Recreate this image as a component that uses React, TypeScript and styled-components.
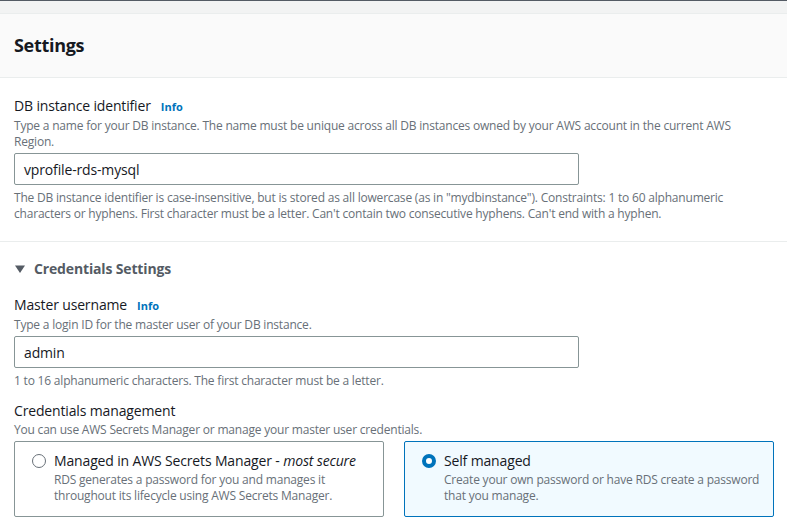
import React from "react";
import styled, { createGlobalStyle } from "styled-components";

const GlobalStyle = createGlobalStyle`
  body {
    margin: 0;
    background: #ffffff;
    font-family: "Open Sans", "Noto Sans", Arial, sans-serif;
    color: #16191f;
  }
`;

const Page = styled.div`
  width: 787px;
  height: 521px;
  overflow: hidden;
  background: #ffffff;
`;

const TopStrip = styled.div`
  height: 12px;
  background: #f2f3f3;
  border-top: 1px solid #545b64;
  border-bottom: 1px solid #eaeded;
`;

const Header = styled.div`
  height: 63px;
  display: flex;
  align-items: center;
  padding: 0 14px;
  background: #fafafa;
  border-bottom: 1px solid #eaeded;
`;

const Title = styled.h2`
  margin: 0 0 1px;
  font-size: 18px;
  font-weight: 700;
  color: #16191f;
  letter-spacing: -0.3px;
`;

const Section = styled.div<{ $divider?: boolean }>`
  padding: 17px 14px ${(p) => (p.$divider ? "19px" : "0")};
  border-bottom: ${(p) => (p.$divider ? "1px solid #eaeded" : "none")};
`;

const Field = styled.div<{ $gap?: number }>`
  margin-top: ${(p) => p.$gap ?? 0}px;
`;

const Label = styled.div`
  display: flex;
  align-items: baseline;
  gap: 10px;
  font-size: 14px;
  line-height: 22px;
  letter-spacing: -0.15px;
  color: #16191f;
`;

const InfoLink = styled.span`
  font-size: 11px;
  font-weight: 700;
  letter-spacing: 0;
  color: #0073bb;
`;

const Description = styled.div<{ $mt?: number }>`
  margin-top: ${(p) => p.$mt ?? 0}px;
  font-size: 12px;
  line-height: 16px;
  letter-spacing: -0.2px;
  color: #687078;
`;

const Input = styled.div`
  box-sizing: border-box;
  width: 565px;
  height: 32px;
  margin-top: 3px;
  padding: 0 9px;
  display: flex;
  align-items: center;
  border: 1px solid #879596;
  border-radius: 2px;
  font-size: 14px;
  letter-spacing: -0.15px;
  color: #16191f;
`;

const Expander = styled.div`
  display: flex;
  align-items: center;
  gap: 9px;
  padding-left: 1px;
  font-size: 14px;
  line-height: 20px;
  font-weight: 700;
  letter-spacing: -0.15px;
  color: #545b64;
`;

const Caret = styled.svg`
  width: 10px;
  height: 10px;
`;

const Tiles = styled.div`
  display: grid;
  grid-template-columns: 370px 370px;
  gap: 20px;
  margin-top: 3px;
`;

const Tile = styled.div<{ $selected?: boolean }>`
  box-sizing: border-box;
  height: 76px;
  display: flex;
  align-items: flex-start;
  gap: 8px;
  padding: 8px 6px 10px 17px;
  border: 1px solid ${(p) => (p.$selected ? "#0073bb" : "#879596")};
  border-radius: 2px;
  background: ${(p) => (p.$selected ? "#f1faff" : "#ffffff")};
`;

const Radio = styled.span<{ $checked?: boolean }>`
  box-sizing: border-box;
  flex: none;
  width: 14px;
  height: 14px;
  margin-top: 4px;
  border-radius: 50%;
  border: ${(p) => (p.$checked ? "4px solid #0073bb" : "1.5px solid #687078")};
  background: #ffffff;
`;

const TileText = styled.div`
  flex: 1;
  display: flex;
  flex-direction: column;
`;

const TileTitle = styled.div`
  font-size: 14px;
  line-height: 22px;
  letter-spacing: -0.15px;
  color: #16191f;
`;

export default function App() {
  return (
    <Page>
      <GlobalStyle />
      <TopStrip />
      <Header>
        <Title>Settings</Title>
      </Header>

      <Section $divider>
        <Label>
          DB instance identifier <InfoLink>Info</InfoLink>
        </Label>
        <Description>
          Type a name for your DB instance. The name must be unique across all DB instances owned by your AWS account in the current AWS Region.
        </Description>
        <Input>vprofile-rds-mysql</Input>
        <Description $mt={5}>
          The DB instance identifier is case-insensitive, but is stored as all lowercase (as in "mydbinstance"). Constraints: 1 to 60 alphanumeric characters or hyphens. First character must be a letter. Can't contain two consecutive hyphens. Can't end with a hyphen.
        </Description>
      </Section>

      <Section>
        <Expander>
          <Caret viewBox="0 0 10 10">
            <path d="M0 1.5 L10 1.5 L5 9 Z" fill="#545b64" />
          </Caret>
          Credentials Settings
        </Expander>

        <Field $gap={15}>
          <Label>
            Master username <InfoLink>Info</InfoLink>
          </Label>
          <Description>Type a login ID for the master user of your DB instance.</Description>
          <Input>admin</Input>
          <Description $mt={5}>1 to 16 alphanumeric characters. The first character must be a letter.</Description>
        </Field>

        <Field $gap={11}>
          <Label>Credentials management</Label>
          <Description>You can use AWS Secrets Manager or manage your master user credentials.</Description>
          <Tiles>
            <Tile>
              <Radio />
              <TileText>
                <TileTitle>
                  Managed in AWS Secrets Manager - <i>most secure</i>
                </TileTitle>
                <Description>
                  RDS generates a password for you and manages it throughout its lifecycle using AWS Secrets Manager.
                </Description>
              </TileText>
            </Tile>
            <Tile $selected>
              <Radio $checked />
              <TileText>
                <TileTitle>Self managed</TileTitle>
                <Description>
                  Create your own password or have RDS create a password that you manage.
                </Description>
              </TileText>
            </Tile>
          </Tiles>
        </Field>
      </Section>
    </Page>
  );
}
